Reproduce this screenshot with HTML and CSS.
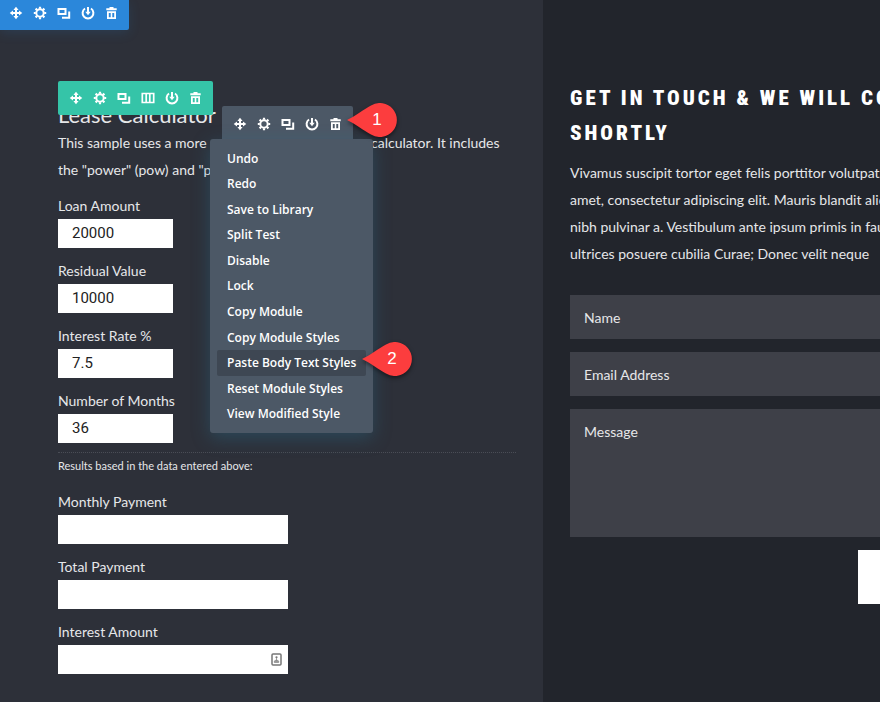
FILE: index.html
```
<!DOCTYPE html>
<html lang="en">
<head>
<meta charset="utf-8">
<title>Lease Calculator</title>
<meta name="viewport" content="width=device-width, initial-scale=1">
<link rel="stylesheet" href="styles.css">
</head>
<body>
<svg class="sprite" aria-hidden="true">
  <symbol id="move" viewBox="0 0 14 14"><path d="M7 2.5v9M2.5 7h9" stroke="currentColor" stroke-width="2"/><path d="M7 .7 9.6 4H4.400zM7 13.300 9.600 10H4.400zM.7 7 4 4.400v5.200zM13.300 7 10 4.400v5.200z" fill="currentColor"/></symbol>
  <symbol id="gear" viewBox="0 0 14 14"><circle cx="7" cy="7" r="3.700" fill="none" stroke="currentColor" stroke-width="2"/><path d="M7 .8v2M7 11.200v2M.8 7h2M11.200 7h2M2.600 2.600 4 4M10 10l1.400 1.400M11.400 2.600 10 4M4 10l-1.400 1.400" stroke="currentColor" stroke-width="2.200"/></symbol>
  <symbol id="copy" viewBox="0 0 14 14"><path d="M1.500 3h7v5h-7zM12.200 5.500v6.300H5" fill="none" stroke="currentColor" stroke-width="2"/></symbol>
  <symbol id="columns" viewBox="0 0 14 14"><path d="M1.300 2.500h11.400v9H1.300zM5.200 3v8M8.800 3v8" fill="none" stroke="currentColor" stroke-width="1.700"/></symbol>
  <symbol id="power" viewBox="0 0 14 14"><path d="M4 2.500a5.400 5.400 0 1 0 6 0M7 1v6" fill="none" stroke="currentColor" stroke-width="2"/><path d="M4.300 5.800h5.400L7 9.200z" fill="currentColor"/></symbol>
  <symbol id="trash" viewBox="0 0 14 14"><path d="M1.300 2.300H4.500V1h4v1.300h3.200v2H1.300zM2 5.300h9V13H2zM3.800 7v4.300h1.900V7zM7.300 7v4.300h1.900V7z" fill="currentColor" fill-rule="evenodd"/></symbol>
  <symbol id="pin" viewBox="0 0 52 34"><path d="M0 17C9 13 17 6 24 2.500A17 17 0 1 1 24 31.500C17 28 9 21 0 17z" fill="#fc3d3e"/></symbol>
</svg>

<div class="toolbar section-tools" role="toolbar" aria-label="Section">
  <button type="button" aria-label="Move"><svg><use href="#move"/></svg></button>
  <button type="button" aria-label="Settings"><svg><use href="#gear"/></svg></button>
  <button type="button" aria-label="Duplicate"><svg><use href="#copy"/></svg></button>
  <button type="button" aria-label="Save"><svg><use href="#power"/></svg></button>
  <button type="button" aria-label="Delete"><svg><use href="#trash"/></svg></button>
</div>

<main class="page">
  <section class="calculator">
    <div class="toolbar row-tools" role="toolbar" aria-label="Row">
      <button type="button" aria-label="Move"><svg><use href="#move"/></svg></button>
      <button type="button" aria-label="Settings"><svg><use href="#gear"/></svg></button>
      <button type="button" aria-label="Duplicate"><svg><use href="#copy"/></svg></button>
      <button type="button" aria-label="Columns"><svg><use href="#columns"/></svg></button>
      <button type="button" aria-label="Save"><svg><use href="#power"/></svg></button>
      <button type="button" aria-label="Delete"><svg><use href="#trash"/></svg></button>
    </div>

    <h2>Lease Calculator</h2>
    <p class="intro">This sample uses a more complicated lease finance calculator. It includes<br>the "power" (pow) and "prec" functions.</p>

    <form>
      <div class="field"><label for="loan">Loan Amount</label><input id="loan" type="text" value="20000"></div>
      <div class="field"><label for="residual">Residual Value</label><input id="residual" type="text" value="10000"></div>
      <div class="field"><label for="rate">Interest Rate %</label><input id="rate" type="text" value="7.5"></div>
      <div class="field"><label for="months">Number of Months</label><input id="months" type="text" value="36"></div>
      <hr>
      <p class="note">Results based in the data entered above:</p>
      <div class="field result"><label for="monthly">Monthly Payment</label><input id="monthly" type="text"></div>
      <div class="field result"><label for="total">Total Payment</label><input id="total" type="text"></div>
      <div class="field result"><label for="interest">Interest Amount</label><input id="interest" type="text">
        <svg class="autofill" viewBox="0 0 11 13" aria-hidden="true"><rect x="1" y="1" width="9" height="11" rx="1" fill="#fff" stroke="#777" stroke-width="1.500"/><circle cx="5.500" cy="4.300" r="1.100" fill="#777"/><path d="M5.500 5v3M3.300 9.500V8l2.200-1.200L7.700 8v1.500z" fill="#999" stroke="#888" stroke-width=".7"/></svg>
      </div>
    </form>

    <div class="module">
      <div class="toolbar module-tools" role="toolbar" aria-label="Module">
        <button type="button" aria-label="Move"><svg><use href="#move"/></svg></button>
        <button type="button" aria-label="Settings"><svg><use href="#gear"/></svg></button>
        <button type="button" aria-label="Duplicate"><svg><use href="#copy"/></svg></button>
        <button type="button" aria-label="Save"><svg><use href="#power"/></svg></button>
        <button type="button" aria-label="Delete"><svg><use href="#trash"/></svg></button>
      </div>
      <div class="menu">
        <button type="button">Undo</button>
        <button type="button">Redo</button>
        <button type="button">Save to Library</button>
        <button type="button">Split Test</button>
        <button type="button">Disable</button>
        <button type="button">Lock</button>
        <button type="button">Copy Module</button>
        <button type="button">Copy Module Styles</button>
        <button type="button" class="active">Paste Body Text Styles</button>
        <button type="button">Reset Module Styles</button>
        <button type="button">View Modified Style</button>
      </div>
      <div class="callout first"><svg><use href="#pin"/></svg><span>1</span></div>
      <div class="callout second"><svg><use href="#pin"/></svg><span>2</span></div>
    </div>
  </section>

  <section class="contact">
    <h1>Get in touch &amp; we will co<br>shortly</h1>
    <p>Vivamus suscipit tortor eget felis porttitor volutpat. L<br>amet, consectetur adipiscing elit. Mauris blandit aliqu<br>nibh pulvinar a. Vestibulum ante ipsum primis in fauc<br>ultrices posuere cubilia Curae; Donec velit neque</p>
    <form>
      <input type="text" placeholder="Name" aria-label="Name">
      <input type="email" placeholder="Email Address" aria-label="Email Address">
      <textarea placeholder="Message" aria-label="Message"></textarea>
      <button type="button" aria-label="Submit"></button>
    </form>
  </section>
</main>
</body>
</html>
```
FILE: styles.css
```
* { box-sizing: border-box; }

body {
  margin: 0;
  background: #22252c;
  color: #e6e7e9;
  font: 14px/27px Lato, "Open Sans", sans-serif;
}

h1, h2, p { margin: 0; }
input, textarea, button { font: inherit; border: 0; border-radius: 0; }
.sprite { position: absolute; width: 0; height: 0; }

.page {
  display: grid;
  grid-template-columns: minmax(0, 543fr) minmax(0, 337fr);
  min-height: 100vh;
}

/* Builder toolbars */
.toolbar {
  display: flex;
  align-items: center;
  padding: 0 5px 0 6px;
  border-radius: 2px;
}
.toolbar button {
  display: flex;
  justify-content: center;
  width: 24px;
  padding: 0;
  background: none;
  color: #fff;
}
.toolbar svg { width: 14px; height: 14px; }
.section-tools {
  position: absolute;
  top: 0;
  left: 0;
  z-index: 2;
  height: 30px;
  padding: 0 5px 4px 4px;
  border-radius: 0 0 2px 0;
  background: #2b87da;
  box-shadow: 0 3px 12px rgba(43, 135, 218, .15);
}
.row-tools {
  position: absolute;
  top: 81px;
  left: 58px;
  height: 34px;
  background: #35c4a8;
}

/* Calculator */
.calculator {
  position: relative;
  padding: 101px 27px 28px 58px;
  background: #2d3039;
}
.calculator h2 { font-size: 22px; font-weight: 400; line-height: 28px; }
.intro { margin-bottom: 9px; }
.field { position: relative; width: 115px; margin-bottom: 9px; }
.field label { display: block; white-space: nowrap; }
.field input {
  display: block;
  width: 100%;
  height: 29px;
  padding: 0 14px;
  background: #fff;
  color: #222;
  font: 15px/29px Roboto, "Liberation Sans", sans-serif;
}
.field.result { width: 230px; }
.autofill { position: absolute; right: 6px; bottom: 8px; width: 11px; height: 13px; }
hr { margin: 0; border: 0; border-top: 1px dotted #4a4d56; }
.note { margin-bottom: 9px; font-size: 11px; line-height: 26px; }

/* Module popup */
.module {
  position: absolute;
  top: 106px;
  left: 210px;
  width: 163px;
}
.module-tools {
  width: 131px;
  height: 35px;
  margin: 0 0 -2px 12px;
  background: #4c5866;
}
.menu {
  display: grid;
  grid-auto-rows: 1fr;
  min-height: 294px;
  padding: 7px 7px 6px;
  border-radius: 3px;
  background: #4c5866;
  box-shadow: 0 5px 18px rgba(43, 110, 140, .4);
}
.menu button {
  padding: 0 10px;
  border-radius: 2px;
  background: none;
  color: #fff;
  font: 600 12px/24px "Open Sans", sans-serif;
  text-align: left;
  white-space: nowrap;
}
.menu .active { background: #3e4753; }

.callout {
  position: absolute;
  display: grid;
  width: 52px;
  height: 34px;
  color: #fff;
  font: 17px/34px "Liberation Sans", sans-serif;
}
.callout svg { grid-area: 1 / 1; width: 52px; height: 34px; filter: drop-shadow(0 2px 2px rgba(0, 0, 0, .5)); }
.callout span { grid-area: 1 / 1; z-index: 1; padding-left: 8px; text-align: center; }
.first { top: -3px; left: 137px; }
.second { top: 236px; left: 152px; }

/* Contact form */
.contact {
  overflow: hidden;
  padding: 81px 0 28px 27px;
  white-space: nowrap;
}
.contact h1 {
  margin-bottom: 8px;
  color: #fff;
  font: 900 21px/35px "Roboto Condensed", Roboto, "Liberation Sans Narrow", sans-serif;
  letter-spacing: 3px;
  text-transform: uppercase;
}
.contact p { margin-bottom: 28px; }
.contact form { display: flex; flex-direction: column; gap: 13px; }
.contact input, .contact textarea {
  width: 100%;
  height: 44px;
  padding: 0 14px;
  background: #3e4048;
  color: #e6e7e9;
}
.contact textarea { height: 128px; padding: 9px 14px; resize: none; }
.contact ::placeholder { color: #e6e7e9; opacity: 1; }
.contact form button { align-self: flex-end; width: 22px; height: 54px; background: #fff; }
```
